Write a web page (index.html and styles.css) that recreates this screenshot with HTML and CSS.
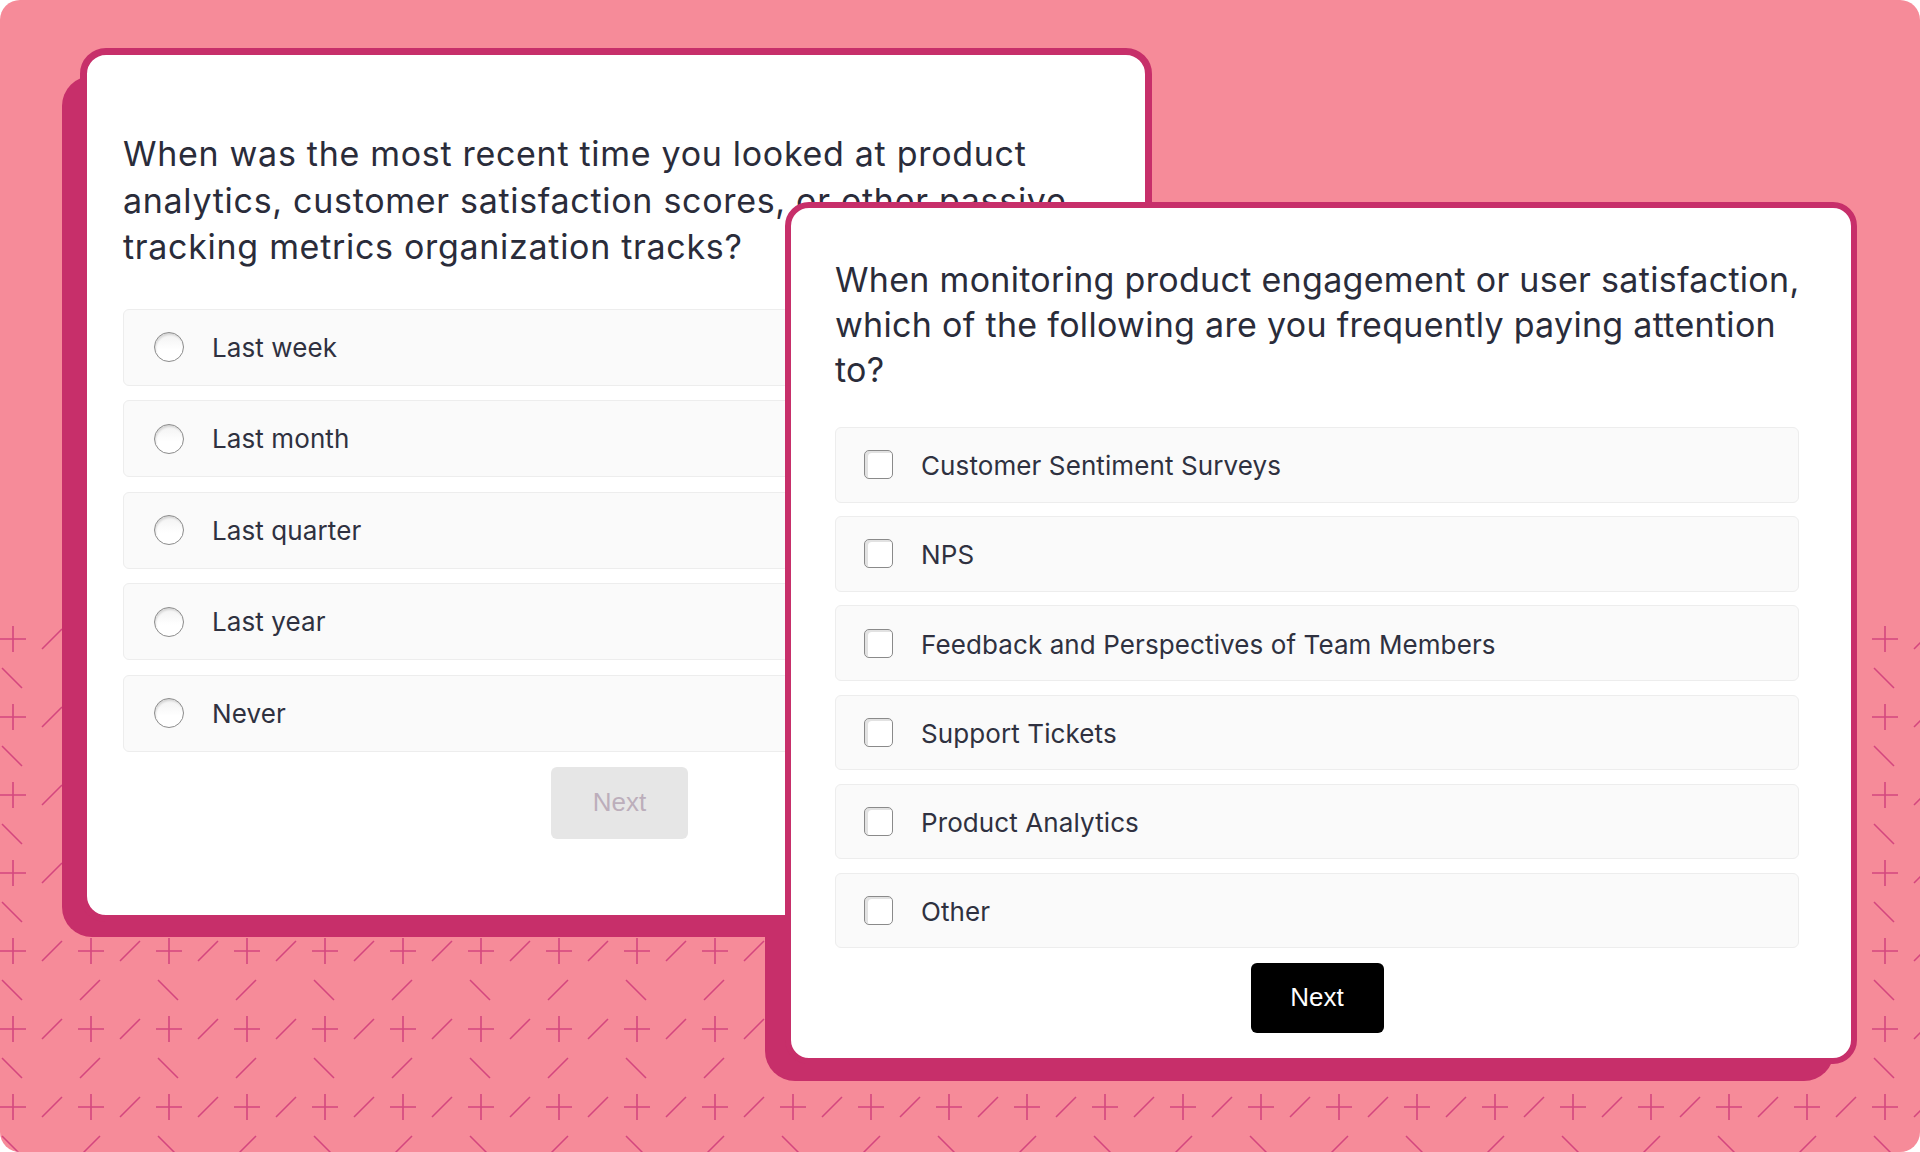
FILE: index.html
```html
<!DOCTYPE html>
<html lang="en">
    <head>
        <meta charset="utf-8" />
        <title>Survey questions</title>
        <link rel="stylesheet" href="styles.css">
    </head>
    <body>
        <div class="page">
            <div class="stage">
                <section class="card cardBack">
                    <h2 class="question">When was the most recent time you looked at product analytics, customer satisfaction scores, or other passive tracking metrics organization tracks?</h2>
                    <ul class="options">
                        <li class="option"><span class="radio"></span><span class="label">Last week</span></li>
                        <li class="option"><span class="radio"></span><span class="label">Last month</span></li>
                        <li class="option"><span class="radio"></span><span class="label">Last quarter</span></li>
                        <li class="option"><span class="radio"></span><span class="label">Last year</span></li>
                        <li class="option"><span class="radio"></span><span class="label">Never</span></li>
                    </ul>
                    <button class="next nextDisabled" disabled>Next</button>
                </section>
                <section class="card cardFront">
                    <h2 class="question">When monitoring product engagement or user satisfaction, which of the following are you frequently paying attention to?</h2>
                    <ul class="options">
                        <li class="option"><span class="check"></span><span class="label">Customer Sentiment Surveys</span></li>
                        <li class="option"><span class="check"></span><span class="label">NPS</span></li>
                        <li class="option"><span class="check"></span><span class="label">Feedback and Perspectives of Team Members</span></li>
                        <li class="option"><span class="check"></span><span class="label">Support Tickets</span></li>
                        <li class="option"><span class="check"></span><span class="label">Product Analytics</span></li>
                        <li class="option"><span class="check"></span><span class="label">Other</span></li>
                    </ul>
                    <button class="next nextActive">Next</button>
                </section>
            </div>
        </div>
    </body>
</html>
```

FILE: styles.css
```css
html, body {
    margin: 0;
    background-color: #ffffff;
    font-family: "Inter", "Noto Sans", sans-serif;
    color: #2f3140;
}

.page {
    width: 1920px;
    height: 1152px;
    box-sizing: border-box;
    padding-top: 48px;
    padding-left: 80px;
    border-radius: 20px;
    overflow: hidden;
    background:
        linear-gradient(#f68b99, #f68b99) 0 0 / 100% 619px no-repeat,
        url("data:image/svg+xml,%3Csvg xmlns='http://www.w3.org/2000/svg' width='156' height='78'%3E%3Cg stroke='%23d4467e' stroke-width='1.6' fill='none'%3E%3Cpath d='M7 20H33M20 7V33M85 20H111M98 7V33M49 30L69 10M127 30L147 10M9 49L29 69M87 69L107 49'/%3E%3C/g%3E%3C/svg%3E") -7px 619px / 156px 78px repeat,
        #f68b99;
}

.stage {
    display: grid;
    isolation: isolate;
}

.card {
    grid-area: 1 / 1;
    justify-self: start;
    align-self: start;
    position: relative;
    box-sizing: border-box;
    width: 1072px;
    display: flex;
    flex-direction: column;
    background-color: #ffffff;
    border: 7px solid #c72f6a;
    border-radius: 26px;
}

/* the offset block behind each card */
.card::before {
    content: "";
    position: absolute;
    z-index: -1;
    background-color: #c72f6a;
    border-radius: 30px;
}

.cardBack {
    height: 874px;
    padding: 76px 29px 0 36px;
}

.cardBack::before {
    top: 21px;
    left: -25px;
    right: 11px;
    bottom: -22px;
}

.cardFront {
    margin-left: 705px;
    margin-top: 154px;
    height: 862px;
    border-width: 6px;
    border-radius: 24px;
    padding: 49px 52px 0 44px;
}

.cardFront::before {
    top: 22px;
    left: -26px;
    right: 17px;
    bottom: -23px;
}

.question {
    margin: 0;
    font-size: 34px;
    font-weight: 400;
    color: #2a2c3a;
}

.cardBack .question {
    line-height: 46.5px;
    letter-spacing: 0.7px;
    margin-bottom: 38px;
}

.cardFront .question {
    line-height: 45px;
    letter-spacing: 0.3px;
    margin-right: -20px;
    margin-bottom: 35px;
}

.options {
    list-style: none;
    margin: 0;
    padding: 0;
    display: flex;
    flex-direction: column;
}

.cardBack .options {
    gap: 14.6px;
}

.cardFront .options {
    gap: 13.7px;
}

.option {
    display: flex;
    align-items: center;
    box-sizing: border-box;
    background-color: #fafafa;
    border: 1px solid #ededed;
    border-radius: 6px;
    font-size: 26px;
}

.cardBack .option {
    height: 77px;
    padding-left: 30px;
}

.cardFront .option {
    height: 75.5px;
    padding-left: 28px;
}

.radio {
    width: 30px;
    height: 30px;
    box-sizing: border-box;
    border-radius: 50%;
    border: 1.5px solid #8c8c8c;
    background: linear-gradient(#f2f2f2, #ffffff 60%);
    box-shadow: inset 1px 2px 2px rgba(0, 0, 0, 0.12);
    margin-right: 28px;
    flex-shrink: 0;
}

.check {
    width: 29px;
    height: 29px;
    box-sizing: border-box;
    border-radius: 5px;
    border: 1.5px solid #8a8a8a;
    background-color: #ffffff;
    box-shadow: inset 3px 2px 0 #e2e2e2;
    margin-right: 28px;
    flex-shrink: 0;
}

.label {
    color: #2f3140;
    letter-spacing: 0.1px;
}

.cardFront .option:first-child .label,
.cardFront .option .label {
    margin-top: 2px;
}

.next {
    align-self: center;
    border: 0;
    border-radius: 6px;
    font-family: "Liberation Sans", Arial, sans-serif;
    font-size: 26px;
}

.nextDisabled {
    width: 137px;
    height: 72px;
    margin-top: 15px;
    background-color: #e6e6e6;
    color: #bcaebb;
}

.nextActive {
    width: 133px;
    height: 70px;
    margin-top: 14.5px;
    background-color: #000000;
    color: #ffffff;
}
```
